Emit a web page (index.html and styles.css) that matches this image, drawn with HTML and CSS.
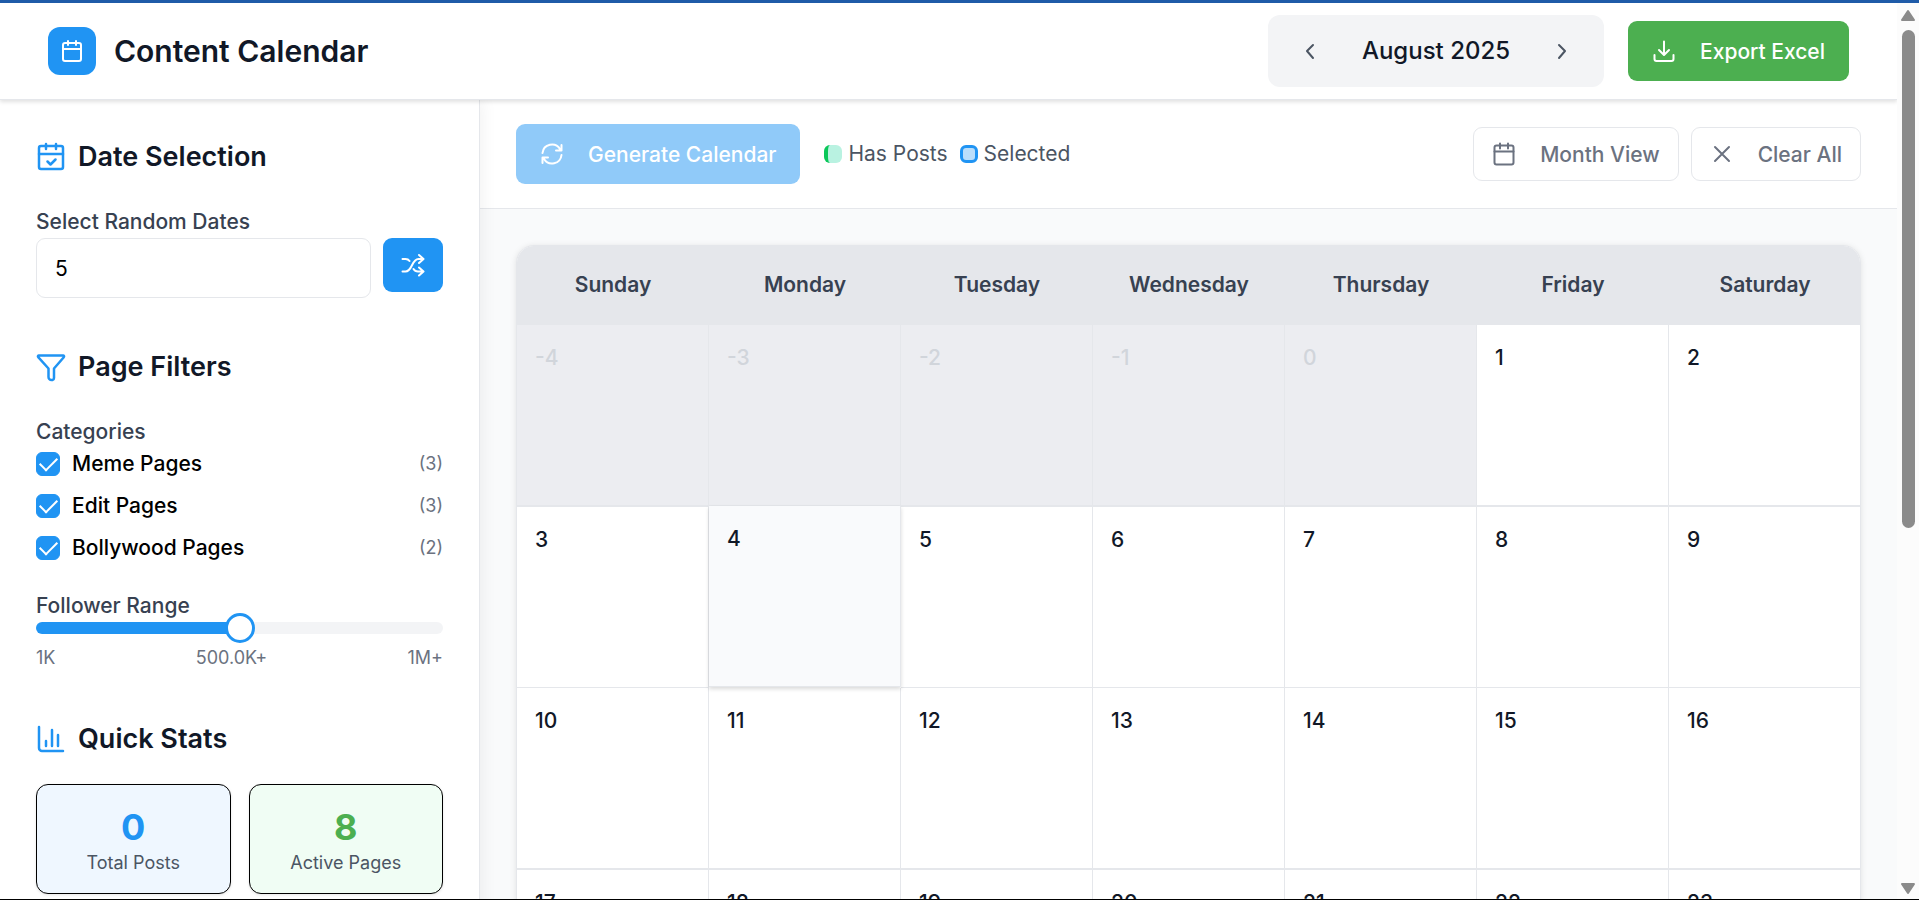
FILE: index.html
```
<!DOCTYPE html>
<html lang="en">
<head>
    <meta charset="UTF-8">
    <meta name="viewport" content="width=device-width, initial-scale=1.0">
    <title>Content Calendar</title>
    <link rel="stylesheet" href="styles.css">
</head>
<body>

    <div class="window">
        <div class="page">
            <header class="header">
                <div class="brand">
                    <div class="brand-logo">
                        <svg class="icon" viewBox="0 0 24 24"><rect x="3" y="4" width="18" height="18" rx="2"/><path d="M3 10h18M8 2v4M16 2v4"/></svg>
                    </div>
                    <h1>Content Calendar</h1>
                </div>
                <div class="header-actions">
                    <div class="month-nav">
                        <button class="nav-btn" id="prevMonth" aria-label="Previous month">
                            <svg class="icon" viewBox="0 0 24 24"><path d="M15 6l-6 6 6 7"/></svg>
                        </button>
                        <span class="month-title" id="monthTitle">August 2025</span>
                        <button class="nav-btn" id="nextMonth" aria-label="Next month">
                            <svg class="icon" viewBox="0 0 24 24"><path d="M9 6l6 6-6 7"/></svg>
                        </button>
                    </div>
                    <button class="btn btn-export">
                        <svg class="icon" viewBox="0 0 24 24"><path d="M12 2.500v13M7 11l5 5 5-5M2.500 16v4a2 2 0 0 0 2 2h15a2 2 0 0 0 2-2v-4"/></svg>
                        Export Excel
                    </button>
                </div>
            </header>

            <div class="layout">
                <aside class="sidebar">
                    <section class="panel">
                        <h2>
                            <svg class="icon" viewBox="0 0 30 30"><rect x="3" y="4" width="24" height="23" rx="2"/><path d="M3 12h24M10 2v5M20 2v5M11.500 19.500l3 3 5-5"/></svg>
                            Date Selection
                        </h2>
                        <label class="label" for="randomDates">Select Random Dates</label>
                        <div class="random-row">
                            <input class="text-input" id="randomDates" type="text" value="5">
                            <button class="btn-shuffle" aria-label="Pick random dates">
                                <svg class="icon" viewBox="0 0 24 24"><path d="M1.500 6h3c2 0 3 .5 4 2M1.500 18.500h3c7 0 6-12.500 13-12.500h4M12.500 16c1 1.700 2.500 2.500 4.500 2.500h5M18 2l4.500 4-4.500 4M18 14.500l4.500 4-4.500 4"/></svg>
                            </button>
                        </div>
                    </section>

                    <section class="panel">
                        <h2>
                            <svg class="icon" viewBox="0 0 30 30"><path d="M3 3.500h24a1 1 0 0 1 .8 1.700L18 16.500v9.500a2 2 0 0 1-1.500 2h-1a3 3 0 0 1-3-3v-8.500L2.200 5.200A1 1 0 0 1 3 3.500z"/></svg>
                            Page Filters
                        </h2>
                        <span class="label">Categories</span>
                        <div class="categories">
                            <label class="category"><input type="checkbox" checked>Meme Pages<span class="count">(3)</span></label>
                            <label class="category"><input type="checkbox" checked>Edit Pages<span class="count">(3)</span></label>
                            <label class="category"><input type="checkbox" checked>Bollywood Pages<span class="count">(2)</span></label>
                        </div>
                        <label class="label" for="followers">Follower Range</label>
                        <input class="slider" id="followers" type="range" min="0" max="100" value="50">
                        <div class="slider-labels">
                            <span>1K</span>
                            <span>500.0K+</span>
                            <span>1M+</span>
                        </div>
                    </section>

                    <section class="panel panel-stats">
                        <h2>
                            <svg class="icon" viewBox="0 0 30 30"><path d="M3 3v21a3 3 0 0 0 3 3h21M10 17v5M16 6v16M22 11v11"/></svg>
                            Quick Stats
                        </h2>
                        <div class="stats">
                            <div class="stat stat-posts">
                                <strong>0</strong>
                                <span>Total Posts</span>
                            </div>
                            <div class="stat stat-pages">
                                <strong>8</strong>
                                <span>Active Pages</span>
                            </div>
                        </div>
                    </section>
                </aside>

                <main class="main">
                    <div class="toolbar">
                        <button class="btn btn-generate">
                            <svg class="icon" viewBox="0 0 24 24"><path d="M2.500 11a9.500 9.500 0 0 1 17.500-4l1.500 1.500M21.500 3v5.500h-5.500M21.500 13a9.500 9.500 0 0 1-17.500 4l-1.500-1.500M2.500 21v-5.500h5.500"/></svg>
                            Generate Calendar
                        </button>
                        <div class="legend">
                            <span class="legend-item"><i class="swatch swatch-posts"></i>Has Posts</span>
                            <span class="legend-item"><i class="swatch swatch-selected"></i>Selected</span>
                        </div>
                        <div class="toolbar-right">
                            <button class="btn btn-outline">
                                <svg class="icon" viewBox="0 0 24 24"><rect x="2.500" y="3.500" width="19" height="19" rx="2"/><path d="M2.500 9.500h19M8 1.500v5M16 1.500v5"/></svg>
                                Month View
                            </button>
                            <button class="btn btn-outline">
                                <svg class="icon" viewBox="0 0 24 24"><path d="M5 5l14 14M19 5L5 19"/></svg>
                                Clear All
                            </button>
                        </div>
                    </div>

                    <div class="calendar-wrap">
                        <table class="calendar">
                            <thead>
                                <tr>
                                    <th>Sunday</th>
                                    <th>Monday</th>
                                    <th>Tuesday</th>
                                    <th>Wednesday</th>
                                    <th>Thursday</th>
                                    <th>Friday</th>
                                    <th>Saturday</th>
                                </tr>
                            </thead>
                            <tbody id="days"></tbody>
                        </table>
                    </div>
                </main>
            </div>
        </div>

        <div class="scrollbar">
            <svg viewBox="0 0 16 12"><path d="M8 2l6 9H2z"/></svg>
            <div class="scrollbar-track"><div class="scrollbar-thumb"></div></div>
            <svg viewBox="0 0 16 12"><path d="M8 10l6-9H2z"/></svg>
        </div>
    </div>

    <script>
        const days = document.getElementById('days');
        const firstDay = -4;
        const lastDay = 31;
        const activeDay = 4;

        // Build the weeks, days before the 1st are shown as disabled
        function displayDays() {
            let day = firstDay;
            while (day <= lastDay) {
                const row = document.createElement('tr');
                for (let i = 0; i < 7; i++) {
                    const cell = document.createElement('td');
                    if (day <= lastDay) {
                        cell.textContent = day;
                    }
                    if (day < 1 || day > lastDay) {
                        cell.classList.add('outside');
                    }
                    if (day === activeDay) {
                        cell.classList.add('active');
                    }
                    row.appendChild(cell);
                    day++;
                }
                days.appendChild(row);
            }
        }

        displayDays();
    </script>

</body>
</html>
```
FILE: styles.css
```
* {
    box-sizing: border-box;
}
body {
    margin: 0;
    font-family: Inter, "Liberation Sans", sans-serif;
    font-size: 21px;
    line-height: 32px;
    color: #111827;
    background-color: #f9fafb;
}
h1, h2 {
    margin: 0;
    font-weight: 600;
}
button, input {
    font-family: inherit;
    font-size: inherit;
    margin: 0;
}
button {
    cursor: pointer;
}
.icon {
    width: 24px;
    height: 24px;
    flex: none;
    fill: none;
    stroke: currentColor;
    stroke-width: 2;
    stroke-linecap: round;
    stroke-linejoin: round;
}
.window {
    display: flex;
    height: 100vh;
    overflow: hidden;
    border-top: 3px solid #1f5ba8;
    border-bottom: 1px solid #000;
}
.page {
    flex: 1;
    min-width: 0;
    overflow: hidden;
}

/* header */
.header {
    position: relative;
    z-index: 3;
    display: flex;
    justify-content: space-between;
    align-items: center;
    padding: 12px 48px;
    background-color: #fff;
    border-bottom: 1px solid #e5e7eb;
    box-shadow: 0 2px 4px rgba(0, 0, 0, 0.12);
}
.brand {
    display: flex;
    align-items: center;
    gap: 18px;
}
.brand-logo {
    display: flex;
    align-items: center;
    justify-content: center;
    width: 48px;
    height: 48px;
    border-radius: 12px;
    background-color: #2094f3;
    color: #fff;
}
.brand h1 {
    font-size: 30px;
    line-height: 42px;
}
.header-actions {
    display: flex;
    align-items: center;
    gap: 24px;
}
.month-nav {
    display: flex;
    align-items: center;
    gap: 22px;
    padding: 12px;
    border-radius: 12px;
    background-color: #f3f4f6;
}
.nav-btn {
    display: flex;
    align-items: center;
    justify-content: center;
    width: 60px;
    height: 48px;
    border: none;
    background: none;
    color: #4b5563;
}
.month-title {
    font-size: 24px;
    font-weight: 500;
}
.btn {
    display: flex;
    align-items: center;
    gap: 24px;
    height: 60px;
    padding: 0 24px;
    border: none;
    border-radius: 9px;
    color: #fff;
    font-weight: 500;
    white-space: nowrap;
}
.btn-export {
    background-color: #4caf50;
}

/* sidebar */
.layout {
    display: flex;
}
.sidebar {
    position: relative;
    z-index: 2;
    flex: none;
    width: 480px;
    padding: 36px;
    background-color: #fff;
    border-right: 1px solid #e5e7eb;
    box-shadow: 2px 0 16px rgba(0, 0, 0, 0.06);
}
.panel {
    margin-bottom: 46px;
}
.panel h2 {
    display: flex;
    align-items: center;
    gap: 12px;
    margin-bottom: 28px;
    font-size: 27px;
    line-height: 42px;
}
.panel h2 .icon {
    width: 30px;
    height: 30px;
    color: #2094f3;
    stroke-width: 2.5;
}
.panel-stats h2 {
    margin-bottom: 24px;
}
.label {
    display: block;
    color: #374151;
    font-weight: 500;
}
.random-row {
    display: flex;
    gap: 12px;
    align-items: flex-start;
    margin-bottom: 48px;
}
.text-input {
    flex: 1;
    min-width: 0;
    height: 60px;
    padding: 0 18px;
    border: 1px solid #e5e7eb;
    border-radius: 9px;
    background-color: #fff;
    color: #000;
}
.btn-shuffle {
    display: flex;
    align-items: center;
    justify-content: center;
    width: 60px;
    height: 54px;
    border: none;
    border-radius: 9px;
    background-color: #2094f3;
    color: #fff;
}
.categories {
    display: flex;
    flex-direction: column;
    gap: 10px;
    margin-bottom: 26px;
}
.category {
    display: flex;
    align-items: center;
    gap: 12px;
    color: #000;
    font-weight: 500;
}
.category input {
    appearance: none;
    display: flex;
    align-items: center;
    justify-content: center;
    width: 24px;
    height: 24px;
    border-radius: 6px;
    border: 1px solid #d1d5db;
}
.category input:checked {
    background-color: #2094f3;
    border-color: #2094f3;
}
.category input:checked::before {
    content: "";
    width: 15px;
    height: 8px;
    margin-bottom: 4px;
    border-left: 2px solid #fff;
    border-bottom: 2px solid #fff;
    transform: rotate(-45deg);
}
.count {
    margin-left: auto;
    font-size: 18px;
    font-weight: 400;
    color: #6b7280;
}
.slider {
    appearance: none;
    display: block;
    width: 100%;
    height: 12px;
    border-radius: 6px;
    background: linear-gradient(to right, #2094f3 50%, #f3f4f6 50%);
}
.slider::-webkit-slider-thumb {
    appearance: none;
    width: 30px;
    height: 30px;
    border: 3px solid #2094f3;
    border-radius: 50%;
    background-color: #fff;
}
.slider-labels {
    display: flex;
    justify-content: space-between;
    margin-top: 10px;
    font-size: 18px;
    line-height: 28px;
    color: #6b7280;
}
.stats {
    display: grid;
    grid-template-columns: 1fr 1fr;
    gap: 18px;
}
.stat {
    display: flex;
    flex-direction: column;
    padding: 20px 18px 16px;
    border: 1px solid #000;
    border-radius: 12px;
    text-align: center;
    font-size: 18px;
    line-height: 28px;
    color: #4b5563;
    box-shadow: 0 1px 3px rgba(0, 0, 0, 0.1);
}
.stat strong {
    font-size: 36px;
    line-height: 44px;
    font-weight: 700;
}
.stat-posts {
    background-color: #eff7ff;
}
.stat-posts strong {
    color: #2094f3;
}
.stat-pages {
    background-color: #f0fdf4;
}
.stat-pages strong {
    color: #4caf50;
}

/* toolbar */
.main {
    flex: 1;
    min-width: 0;
}
.toolbar {
    display: flex;
    align-items: center;
    gap: 24px;
    padding: 24px 36px;
    background-color: #fff;
    border-bottom: 1px solid #e5e7eb;
}
.btn-generate {
    background-color: #90caf9;
}
.legend {
    display: flex;
    gap: 12px;
    color: #4b5563;
}
.legend-item {
    display: flex;
    align-items: center;
    gap: 6px;
}
.swatch {
    width: 18px;
    height: 18px;
    border-radius: 6px;
}
.swatch-posts {
    background-color: #b9f2e1;
    border-left: 4px solid #0ac759;
}
.swatch-selected {
    background-color: #bbdefb;
    border: 3px solid #2094f3;
}
.toolbar-right {
    display: flex;
    gap: 12px;
    margin-left: auto;
}
.btn-outline {
    height: 54px;
    padding: 0 18px;
    border: 1px solid #e5e7eb;
    background-color: #fff;
    color: #6b7280;
}

/* calendar */
.calendar-wrap {
    margin: 36px;
    border: 1px solid #e5e7eb;
    border-radius: 18px;
    background-color: #fff;
    overflow: hidden;
    box-shadow: 0 1px 6px rgba(0, 0, 0, 0.1);
}
/* 1px wider than the wrap, so the last column's border is clipped */
.calendar {
    width: calc(100% + 1px);
    table-layout: fixed;
    border-collapse: separate;
    border-spacing: 0;
}
.calendar th {
    height: 79px;
    padding: 0 0 2px;
    background-color: #e5e7eb;
    color: #374151;
    font-weight: 600;
}
.calendar td {
    height: 181px;
    padding: 18px;
    vertical-align: top;
    line-height: 30px;
    font-weight: 500;
    background-color: #fff;
    border-right: 1px solid #e5e7eb;
    border-bottom: 1px solid #e5e7eb;
}
.calendar tr:nth-child(odd) td {
    height: 182px;
    border-bottom-width: 2px;
}
.calendar td.outside {
    background-color: #ecedf1;
    color: #d1d5db;
}
.calendar td.active {
    position: relative;
    z-index: 1;
    background-color: #f9fafc;
    transform: translateY(-1px);
    box-shadow: 0 2px 4px rgba(0, 0, 0, 0.15);
}

/* scrollbar */
.scrollbar {
    display: flex;
    flex-direction: column;
    align-items: center;
    flex: none;
    width: 22px;
    padding: 6px 0 4px;
    background-color: #fcfcfc;
}
.scrollbar svg {
    width: 16px;
    height: 12px;
    fill: #8b8b8b;
    stroke: #8b8b8b;
    stroke-width: 2;
    stroke-linejoin: round;
}
.scrollbar-track {
    flex: 1;
    width: 13px;
    padding: 9px 0;
}
.scrollbar-thumb {
    height: 59%;
    border-radius: 7px;
    background-color: #8b8b8b;
}
```
